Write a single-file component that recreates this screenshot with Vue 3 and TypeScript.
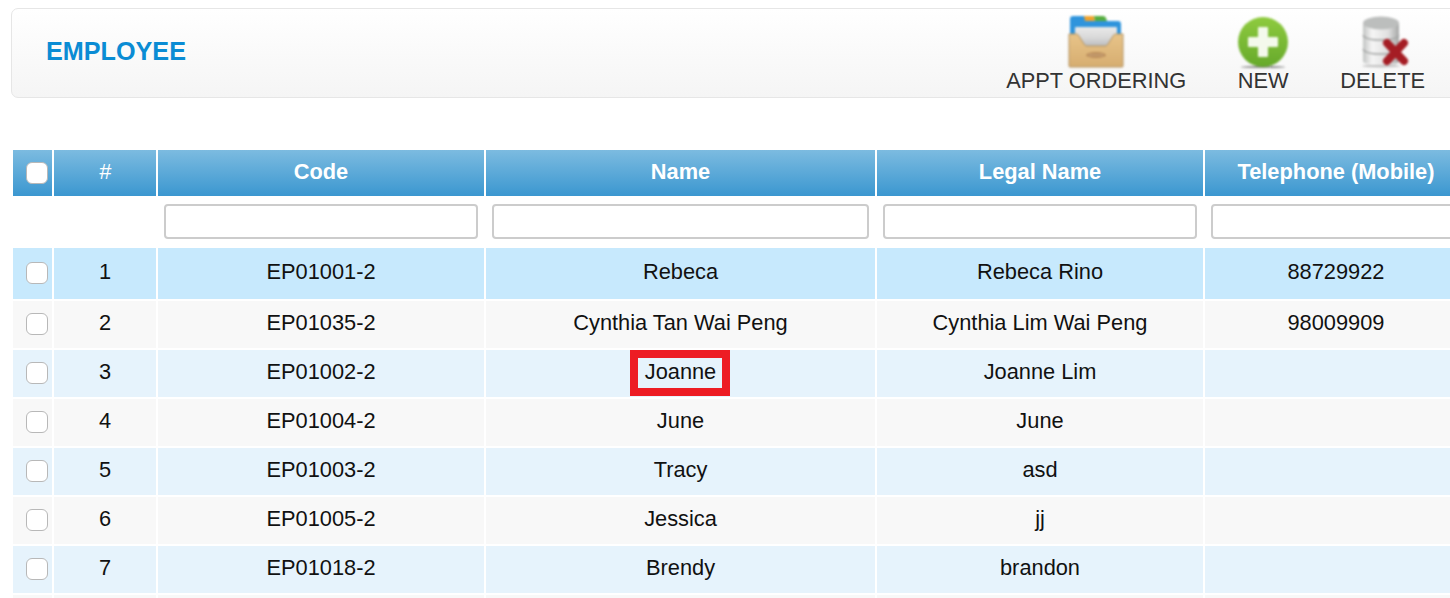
<script setup lang="ts">
interface Employee {
  id: number
  code: string
  name: string
  legalName: string
  mobile: string
}

const columns = ['Code', 'Name', 'Legal Name', 'Telephone (Mobile)']

const employees: Employee[] = [
  { id: 1, code: 'EP01001-2', name: 'Rebeca', legalName: 'Rebeca Rino', mobile: '88729922' },
  { id: 2, code: 'EP01035-2', name: 'Cynthia Tan Wai Peng', legalName: 'Cynthia Lim Wai Peng', mobile: '98009909' },
  { id: 3, code: 'EP01002-2', name: 'Joanne', legalName: 'Joanne Lim', mobile: '' },
  { id: 4, code: 'EP01004-2', name: 'June', legalName: 'June', mobile: '' },
  { id: 5, code: 'EP01003-2', name: 'Tracy', legalName: 'asd', mobile: '' },
  { id: 6, code: 'EP01005-2', name: 'Jessica', legalName: 'jj', mobile: '' },
  { id: 7, code: 'EP01018-2', name: 'Brendy', legalName: 'brandon', mobile: '' },
]
</script>

<template>
  <div class="page">
    <header class="toolbar">
      <h1 class="title">EMPLOYEE</h1>
      <div class="actions">
        <a class="action">
          <svg class="icon" width="56" height="53" viewBox="0 0 56 53">
            <defs>
              <linearGradient id="tray" x1="0" y1="0" x2="0" y2="1">
                <stop offset="0" stop-color="#e8c489" />
                <stop offset="1" stop-color="#d6ad70" />
              </linearGradient>
              <linearGradient id="paper" x1="0" y1="0" x2="0" y2="1">
                <stop offset="0" stop-color="#e9e9e9" />
                <stop offset="0.500" stop-color="#d9d9d9" />
                <stop offset="1" stop-color="#b4b6b8" />
              </linearGradient>
            </defs>
            <path d="M2 26V4q0-3 3-3h12l1 5h32q3 0 3 3v17z" fill="#2f94dc" />
            <path d="M16 1h10l1 5H17z" fill="#f0a32e" />
            <path d="M26 1h9q2 0 3 2l1 3H27z" fill="#55ad3f" />
            <path d="M8 12h40q1 0 1 1v12l-6 8H13l-6-8V13q0-1 1-1z" fill="url(#paper)" />
            <path d="M1 19h7q2 0 3 2l5 8q1 2 3 2h18q2 0 3-2l5-8q1-2 3-2h7v32q0 1-1 1H2q-1 0-1-1z" fill="url(#tray)" stroke="#b39363" stroke-width="1" />
            <ellipse cx="28" cy="40" rx="10" ry="3" fill="#bb8d5b" />
            <path d="M21 40h14" stroke="#d8c0a0" stroke-width="1" stroke-dasharray="1.500 1" />
          </svg>
          <span>APPT ORDERING</span>
        </a>
        <a class="action">
          <svg class="icon" width="52" height="53" viewBox="0 0 52 53">
            <defs>
              <linearGradient id="green" x1="0" y1="0" x2="0" y2="1">
                <stop offset="0" stop-color="#8fcb3f" />
                <stop offset="1" stop-color="#66a92b" />
              </linearGradient>
            </defs>
            <ellipse cx="26" cy="52" rx="22" ry="1" fill="#8a8a8a" />
            <circle cx="26" cy="27" r="25" fill="url(#green)" />
            <path d="M22 12h8q1 0 1 1v9h9q1 0 1 1v8q0 1-1 1h-9v9q0 1-1 1h-8q-1 0-1-1v-9h-9q-1 0-1-1v-8q0-1 1-1h9v-9q0-1 1-1z" fill="#f4f9ec" />
          </svg>
          <span>NEW</span>
        </a>
        <a class="action">
          <svg class="icon db" width="50" height="53" viewBox="0 0 50 53">
            <defs>
              <linearGradient id="metal" x1="0" y1="0" x2="1" y2="0">
                <stop offset="0" stop-color="#c2c4c3" />
                <stop offset="0.250" stop-color="#f5f5f5" />
                <stop offset="0.700" stop-color="#e0e0e0" />
                <stop offset="1" stop-color="#a5a7a6" />
              </linearGradient>
            </defs>
            <ellipse cx="20" cy="51" rx="19" ry="1.500" fill="#c4c4c4" />
            <path d="M2 8v38q0 4 18 4t18-4V8z" fill="url(#metal)" />
            <ellipse cx="20" cy="8" rx="18" ry="6.500" fill="#bcbebd" />
            <path d="M2 20q2 5 18 5t18-5M2 34q2 5 18 5t18-5" fill="none" stroke="#a3a5a4" stroke-width="1.500" />
            <path d="M26 28l17 18M43 28L26 46" fill="none" stroke="#a51d24" stroke-width="8" stroke-linecap="round" />
          </svg>
          <span>DELETE</span>
        </a>
      </div>
    </header>

    <table class="grid">
      <colgroup>
        <col class="col-check" />
        <col class="col-index" />
        <col class="col-code" />
        <col class="col-name" />
        <col class="col-legal" />
        <col class="col-mobile" />
      </colgroup>
      <thead>
        <tr class="head">
          <th><input class="check" type="checkbox" /></th>
          <th class="hash">#</th>
          <th v-for="col in columns" :key="col">{{ col }}</th>
        </tr>
        <tr class="filters">
          <td></td>
          <td></td>
          <td v-for="col in columns" :key="col"><input class="filter" type="text" /></td>
        </tr>
      </thead>
      <tbody>
        <tr v-for="emp in employees" :key="emp.id" :class="{ active: emp.id === 1 }">
          <td><input class="check" type="checkbox" /></td>
          <td>{{ emp.id }}</td>
          <td>{{ emp.code }}</td>
          <td class="name-cell">
            {{ emp.name }}
            <span v-if="emp.id === 3" class="highlight"></span>
          </td>
          <td>{{ emp.legalName }}</td>
          <td>{{ emp.mobile }}</td>
        </tr>
        <tr class="cut">
          <td></td><td></td><td></td><td></td><td></td><td></td>
        </tr>
      </tbody>
    </table>
  </div>
</template>

<style>
html,
body {
  margin: 0;
  background: #fff;
  overflow: hidden;
}
</style>

<style scoped>
.page {
  width: 1450px;
  height: 598px;
  overflow: hidden;
  font-family: 'Liberation Sans', Arial, sans-serif;
  font-size: 21.8px;
  color: #111;
  padding: 8px 0 0 11px;
  box-sizing: border-box;
}

.toolbar {
  width: 1460px;
  height: 90px;
  box-sizing: border-box;
  display: flex;
  justify-content: space-between;
  align-items: flex-start;
  padding: 0 45px 0 34px;
  border: 1px solid #e6e6e6;
  border-radius: 7px;
  background: linear-gradient(#fff, #f5f5f5);
}

.title {
  margin: 27px 0 0;
  font-size: 25.200px;
  line-height: 30px;
  font-weight: 700;
  color: #0a8cd4;
}

.actions {
  display: flex;
  gap: 51px;
  padding-top: 6px;
}

.action {
  display: flex;
  flex-direction: column;
  align-items: center;
  color: #333;
  font-size: 21.8px;
  line-height: 24px;
}

.icon {
  display: block;
  margin-bottom: 1px;
  filter: blur(0.8px);
}

.db {
  margin-left: 6px;
}

.grid {
  margin: 50px 0 0 0;
  width: 1458px;
  table-layout: fixed;
  border-collapse: separate;
  border-spacing: 2px;
}

.col-check { width: 39px; }
.col-index { width: 102px; }
.col-code { width: 326px; }
.col-name { width: 389px; }
.col-legal { width: 326px; }
.col-mobile { width: 262px; }

.head th {
  height: 46px;
  padding: 0 0 3px;
  box-sizing: border-box;
  color: #fff;
  font-size: 21.8px;
  font-weight: 700;
  background: linear-gradient(#7cbbe0, #3b97d0);
  text-align: center;
}

.hash {
  font-weight: 400 !important;
  font-style: italic;
}

.filters td {
  height: 48px;
  padding: 0 6px 2px;
  box-sizing: border-box;
}

.filter {
  display: block;
  width: 100%;
  height: 35px;
  box-sizing: border-box;
  border: 2px solid #ccc;
  border-radius: 4px;
  background: #fff;
  outline: none;
}

tbody td {
  height: 47px;
  padding: 0 0 4px;
  box-sizing: border-box;
  text-align: center;
  background: #e6f3fc;
}

tbody tr:nth-child(even) td {
  background: #f8f8f8;
}

tbody tr.active td {
  height: 51px;
  background: #c7e9fd;
}

.head th:first-child {
  padding: 0 0 2px 9px;
}

tbody td:first-child {
  padding: 0 0 4px 9px;
}

.check {
  appearance: none;
  display: inline-block;
  vertical-align: middle;
  margin: 0;
  width: 22px;
  height: 22px;
  box-sizing: border-box;
  border: 1.500px solid #b8b8b8;
  border-radius: 6px;
  background: #fff;
}

.name-cell {
  position: relative;
}

.highlight {
  position: absolute;
  top: 0;
  bottom: 1px;
  left: 50%;
  width: 100px;
  margin-left: -1px;
  transform: translateX(-50%);
  box-sizing: border-box;
  border: 8px solid #ed1c24;
}
</style>
